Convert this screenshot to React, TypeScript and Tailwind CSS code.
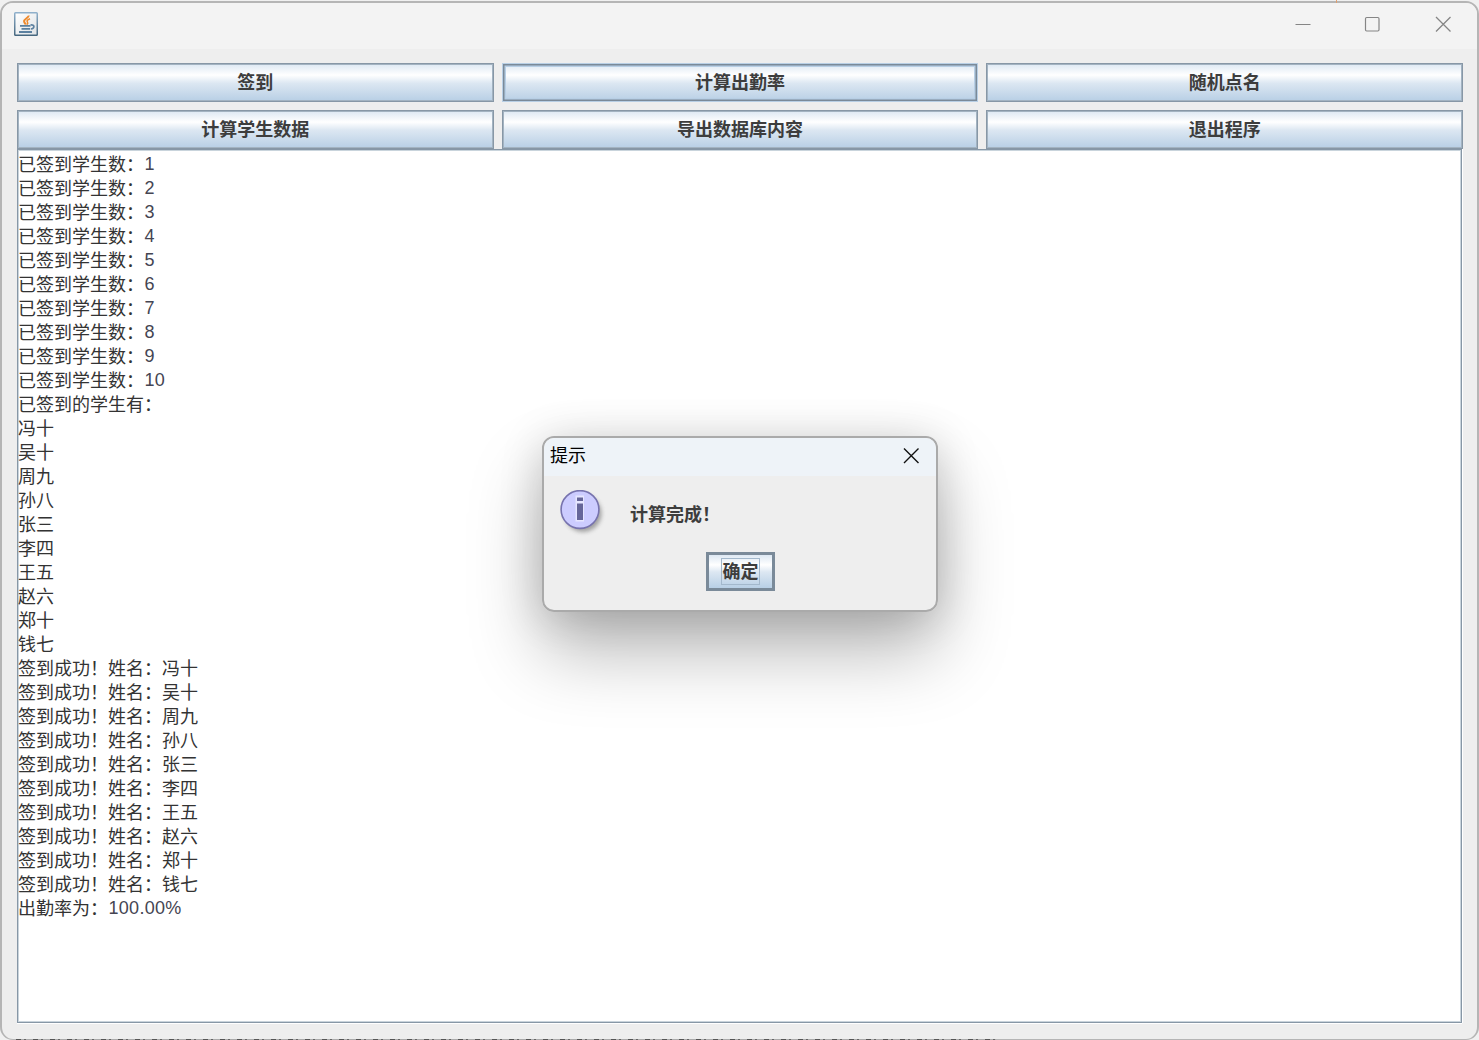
import React from "react";

const NAMES = ["冯十", "吴十", "周九", "孙八", "张三", "李四", "王五", "赵六", "郑十", "钱七"];

type LogLine = { text: string; value?: string };

const LOG_LINES: LogLine[] = [
  ...NAMES.map((_, i) => ({ text: "已签到学生数：", value: String(i + 1) })),
  { text: "已签到的学生有：" },
  ...NAMES.map((name) => ({ text: name })),
  ...NAMES.map((name) => ({ text: `签到成功！姓名：${name}` })),
  { text: "出勤率为：", value: "100.00%" },
];

const ACTIONS = ["签到", "计算出勤率", "随机点名", "计算学生数据", "导出数据库内容", "退出程序"];

function JavaIcon() {
  return (
    <svg width="24" height="24" viewBox="0 0 24 24" fill="none">
      <defs>
        <linearGradient id="frame" x1="0" y1="0" x2="0" y2="1">
          <stop offset="0" stopColor="#8fb0cb" />
          <stop offset="1" stopColor="#46677f" />
        </linearGradient>
        <linearGradient id="face" x1="0" y1="0" x2="1" y2="1">
          <stop offset="0" stopColor="#ffffff" />
          <stop offset="1" stopColor="#dfe3e6" />
        </linearGradient>
      </defs>
      <rect x="0.75" y="0.75" width="22.5" height="22.5" rx="0.8" fill="url(#face)" stroke="url(#frame)" strokeWidth="1.5" />
      <path d="M14.6 3.5c.6 2.2-4.700 3.200-4.500 5.900.1 1.300 1.400 2 1.500 3.200" stroke="#ee8a2d" strokeWidth="2" />
      <path d="M16 6.700c-2.600 1-3.600 2.100-2.500 3.500.6.800.3 1.600-.7 2.400" stroke="#ee8a2d" strokeWidth="1.500" />
      <path d="M6 13.900h10.500M7.500 16.900h8.500M5 20h13" stroke="#5c81a0" strokeWidth="1.900" />
      <path d="M16.500 13c4.600-1 4.300 3.500.3 4" stroke="#5c81a0" strokeWidth="1.700" />
    </svg>
  );
}

function InfoIcon() {
  return (
    <svg width="48" height="50" viewBox="0 0 48 50" fill="none">
      <defs>
        <filter id="soft" x="-20%" y="-20%" width="150%" height="150%">
          <feGaussianBlur stdDeviation="2" />
        </filter>
      </defs>
      <circle cx="23" cy="23.500" r="18.500" fill="#777777" opacity="0.65" filter="url(#soft)" />
      <circle cx="20" cy="19.500" r="18.900" fill="#ccccff" stroke="#7773ae" strokeWidth="1.600" />
      <path d="M15.500 5.500h8.500v7h-8.500zM15.500 12.500h8.500v19h-8.500z" fill="#e6e6ff" />
      <path d="M17 7.500h6v3.500h-6zM17 13.500h6v16.500h-6z" fill="#666699" />
    </svg>
  );
}

function ActionButton({ label, focused }: { label: string; focused: boolean }) {
  return (
    <button
      className={
        "flex h-[39px] items-center justify-center bg-[linear-gradient(to_bottom,#dde8f3_0%,#ffffff_30%,#dce7f2_52%,#b8cfe5_100%)] pt-[1px] text-[18px] leading-6 font-bold text-[#3d3d3d] " +
        (focused
          ? "border border-[#b8cfe5] shadow-[inset_0_0_0_1.5px_#7a8a99,inset_0_0_0_3px_#b8cfe5]"
          : "border border-[#8797a6] shadow-[inset_0_0_0_1px_#a3b3c1]")
      }
    >
      {label}
    </button>
  );
}

function MessageDialog() {
  return (
    <div className="absolute top-[436px] left-[542px] flex h-[176px] w-[396px] flex-col overflow-hidden rounded-[12px] border-2 border-[#aaaaaa] bg-[#eeeeee]">
      <div className="flex h-[38px] shrink-0 items-start justify-between bg-[#eef3f8] pr-[17px] pl-[6px]">
        <span className="mt-[6px] text-[18px] leading-6 text-black">提示</span>
        <svg className="mt-[10px]" width="16" height="16" viewBox="0 0 16 16" stroke="#111111" strokeWidth="1.400">
          <path d="M1 0.500l14.500 14.500M15.500 0.500l-14.500 14.500" />
        </svg>
      </div>
      <div className="flex h-[76px] shrink-0 pt-[14px] pl-[16px]">
        <InfoIcon />
        <span className="mt-[13px] ml-[22px] text-[18px] leading-6 font-bold text-[#3d3d3d]">计算完成！</span>
      </div>
      <div className="flex justify-center">
        <button className="flex h-[39px] w-[69px] items-center justify-center border-[3px] border-[#7a8a99] bg-[linear-gradient(to_bottom,#dde8f3_0%,#ffffff_30%,#dce7f2_52%,#b8cfe5_100%)] text-[18px] leading-6 font-bold text-[#3d3d3d]">
          <span className="flex h-[27px] w-[39px] items-center justify-center border border-[#a3b8cc] pt-[1px] pl-[1px]">确定</span>
        </button>
      </div>
    </div>
  );
}

export default function App() {
  return (
    <div className="relative h-[1040px] w-[1479px] overflow-hidden bg-[#f0f0f0] pt-px font-['Liberation_Sans','Noto_Sans_CJK_SC',sans-serif]">
      <div className="flex h-[1039px] flex-col overflow-hidden rounded-[13px] border-2 border-b border-[#b5b5b5] bg-[#eeeeee]">
        <header className="flex h-[46px] shrink-0 items-start justify-between bg-[#f3f3f3] pt-[9px] pr-[26px] pl-[12px]">
          <JavaIcon />
          <div className="flex items-center pt-[4px] text-[#858585]">
            <svg width="16" height="16" viewBox="0 0 16 16" stroke="currentColor">
              <path d="M0.500 8.500h15" />
            </svg>
            <svg className="ml-[53px]" width="16" height="16" viewBox="0 0 16 16" fill="none" stroke="currentColor" strokeWidth="1.200">
              <rect x="1.500" y="1.500" width="13.500" height="13.500" rx="1.200" />
            </svg>
            <svg className="ml-[55px]" width="16" height="16" viewBox="0 0 16 16" stroke="currentColor" strokeWidth="1.300">
              <path d="M1 1l14.500 14.500M15.500 1l-14.500 14.500" />
            </svg>
          </div>
        </header>
        <main className="flex grow flex-col px-[15px] pt-[14px] pb-[16px]">
          <div className="grid w-[1446px] grid-cols-3 gap-x-[8px] gap-y-[8px]">
            {ACTIONS.map((label) => (
              <ActionButton key={label} label={label} focused={label === "计算出勤率"} />
            ))}
          </div>
          <section className="w-[1445px] grow border border-[#8797a6] bg-white pt-[2px] shadow-[inset_0_0_0_1px_#c9d4dc,0_1px_0_#ffffff,1px_0_0_#ffffff]">
            {LOG_LINES.map(({ text, value }, i) => (
              <p key={i} className="flex h-6 text-[18px] leading-6 whitespace-pre text-[#333333]">
                <span className="mt-[0.5px]">{text}</span>
                {value && <span className="ml-[0.5px] tracking-[0.3px] text-[#454552]">{value}</span>}
              </p>
            ))}
          </section>
        </main>
      </div>
      <div className="absolute top-0 left-[1336px] h-[3px] w-px bg-[#e0a070]" />
      <div className="absolute bottom-0 left-[16px] h-px w-[980px] bg-[repeating-linear-gradient(to_right,#555555_0_5px,#aaaaaa_5px_8px,#666666_8px_10px,#aaaaaa_10px_17px)]" />
      <div className="absolute inset-x-[18px] top-[151px] bottom-[18px] overflow-hidden">
        <div className="absolute top-[285px] left-[524px] h-[176px] w-[396px] rounded-[12px] shadow-[0_40px_72px_0_rgba(0,0,0,0.28),0_4px_44px_0_rgba(0,0,0,0.16)]" />
      </div>
      <MessageDialog />
    </div>
  );
}
